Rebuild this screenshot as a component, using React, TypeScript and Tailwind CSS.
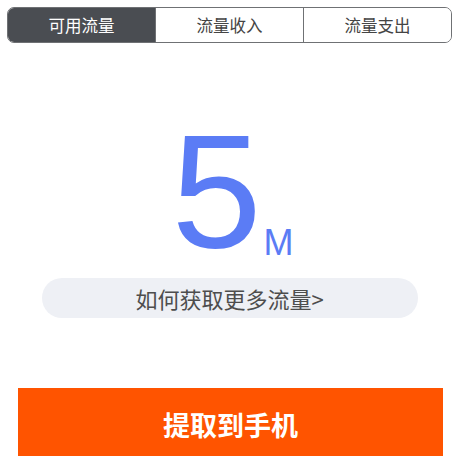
import { useState } from 'react'

// Traffic wallet — tabs, current balance, help link and the withdraw button.

const TABS = ['可用流量', '流量收入', '流量支出']

const CJK = 'font-["PingFang_SC","Noto_Sans_CJK_SC",sans-serif]'

export default function App() {
  const [tab, setTab] = useState(0)

  return (
    <div className={`h-[456px] overflow-hidden bg-white ${CJK}`}>
      <div className="px-[7px] pt-[7px]">
        <div className="flex h-[36px] rounded-[7px] border-[1.5px] border-[#6f7174] overflow-hidden">
          {TABS.map((t, i) => (
            <button key={t} onClick={() => setTab(i)}
              className={`flex-1 flex items-center justify-center text-[16.5px] ${i > 0 ? 'border-l-[1.5px] border-[#6f7174]' : ''} ${tab === i ? 'bg-[#4a4d52] text-white' : 'bg-white text-[#444]'}`}>
              {t}
            </button>
          ))}
        </div>
      </div>

      <div className="mt-[67px] pl-[6px] flex justify-center items-end font-['Liberation_Sans',Arial,sans-serif] text-[#5b7cf5]">
        <span className="text-[162px] leading-none">5</span>
        <span className="text-[36px] leading-none mb-[11px] ml-[2px]">M</span>
      </div>

      <div className="mt-[6px] mx-auto w-[376px] h-[40px] rounded-full bg-[#eef0f5] flex items-center justify-center text-[22px] text-[#4d4d4d]">
        如何获取更多流量&gt;
      </div>

      <button className="mt-[70px] ml-[18px] w-[425px] h-[74px] bg-[#ff5400] text-white text-[27px] font-bold flex items-center justify-center">
        提取到手机
      </button>
    </div>
  )
}
